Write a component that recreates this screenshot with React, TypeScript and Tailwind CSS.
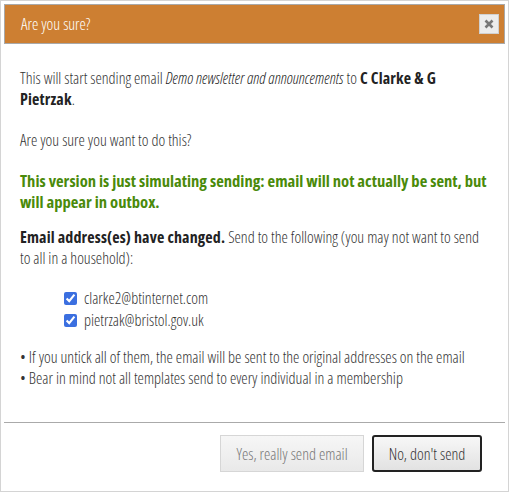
const font = { fontFamily: '"Open Sans", "Liberation Sans", sans-serif', fontStretch: "75%" }

export default function App() {
  return (
    <div className="w-[509px] h-[492px] bg-white border border-[#d4d4d4] p-[3px] flex flex-col" style={font}>
      <div className="h-[40px] bg-[#cd7f32] border border-[#a9a9a9] flex items-center justify-between pl-4 pr-[5px]">
        <span className="text-white text-[16px] font-light">Are you sure?</span>
        <button className="w-[20px] h-[20px] bg-[#ececec] border border-[#d0d0d0] flex items-center justify-center">
          <svg width="10" height="10" viewBox="0 0 10 10">
            <path d="M1.5 1.5 L8.5 8.5 M8.5 1.5 L1.5 8.5" stroke="#777" strokeWidth="2.6" />
          </svg>
        </button>
      </div>
      <div className="px-4 pt-[24px] text-[16px] leading-[21px] text-[#333] font-light">
        <p>
          This will start sending email <i className="font-light text-[#222]">Demo newsletter and announcements</i> to{" "}
          <b className="font-bold text-[#222] tracking-[0.15px]">C Clarke &amp; G Pietrzak</b>.
        </p>
        <p className="mt-[20px]">Are you sure you want to do this?</p>
        <p className="mt-[19px] font-bold text-[#4a8a0a] text-[16.6px]">
          This version is just simulating sending: email will not actually be sent, but will appear in outbox.
        </p>
        <p className="mt-[15px]">
          <b className="font-bold text-[#222] tracking-[0.15px]">Email address(es) have changed.</b> Send to the following
          (you may not want to send to all in a household):
        </p>
        <div className="mt-[18px] pl-[44px] flex flex-col">
          <label className="flex items-center gap-[7px] h-[22px]">
            <input type="checkbox" defaultChecked className="w-[13px] h-[13px] accent-[#3b6fe0]" />
            clarke2@btinternet.com
          </label>
          <label className="flex items-center gap-[7px] h-[22px]">
            <input type="checkbox" defaultChecked className="w-[13px] h-[13px] accent-[#3b6fe0]" />
            pietrzak@bristol.gov.uk
          </label>
        </div>
        <div className="mt-[16px]">
          <p>• If you untick all of them, the email will be sent to the original addresses on the email</p>
          <p>• Bear in mind not all templates send to every individual in a membership</p>
        </div>
      </div>
      <div className="mt-auto border-t border-[#aaa] h-[66px] flex items-start justify-end gap-[8px] pt-[12px] pr-[23px]">
        <button className="w-[144px] h-[37px] border border-[#d6d6d6] bg-gradient-to-b from-[#f6f6f6] to-[#e9e9e9] text-[#777] text-[16px] font-light">
          Yes, really send email
        </button>
        <button className="w-[110px] h-[37px] border-2 border-[#222] rounded-[3px] bg-gradient-to-b from-[#f7f7f7] to-[#e2e2e2] text-[#333] text-[16px] font-light">
          No, don't send
        </button>
      </div>
    </div>
  )
}
